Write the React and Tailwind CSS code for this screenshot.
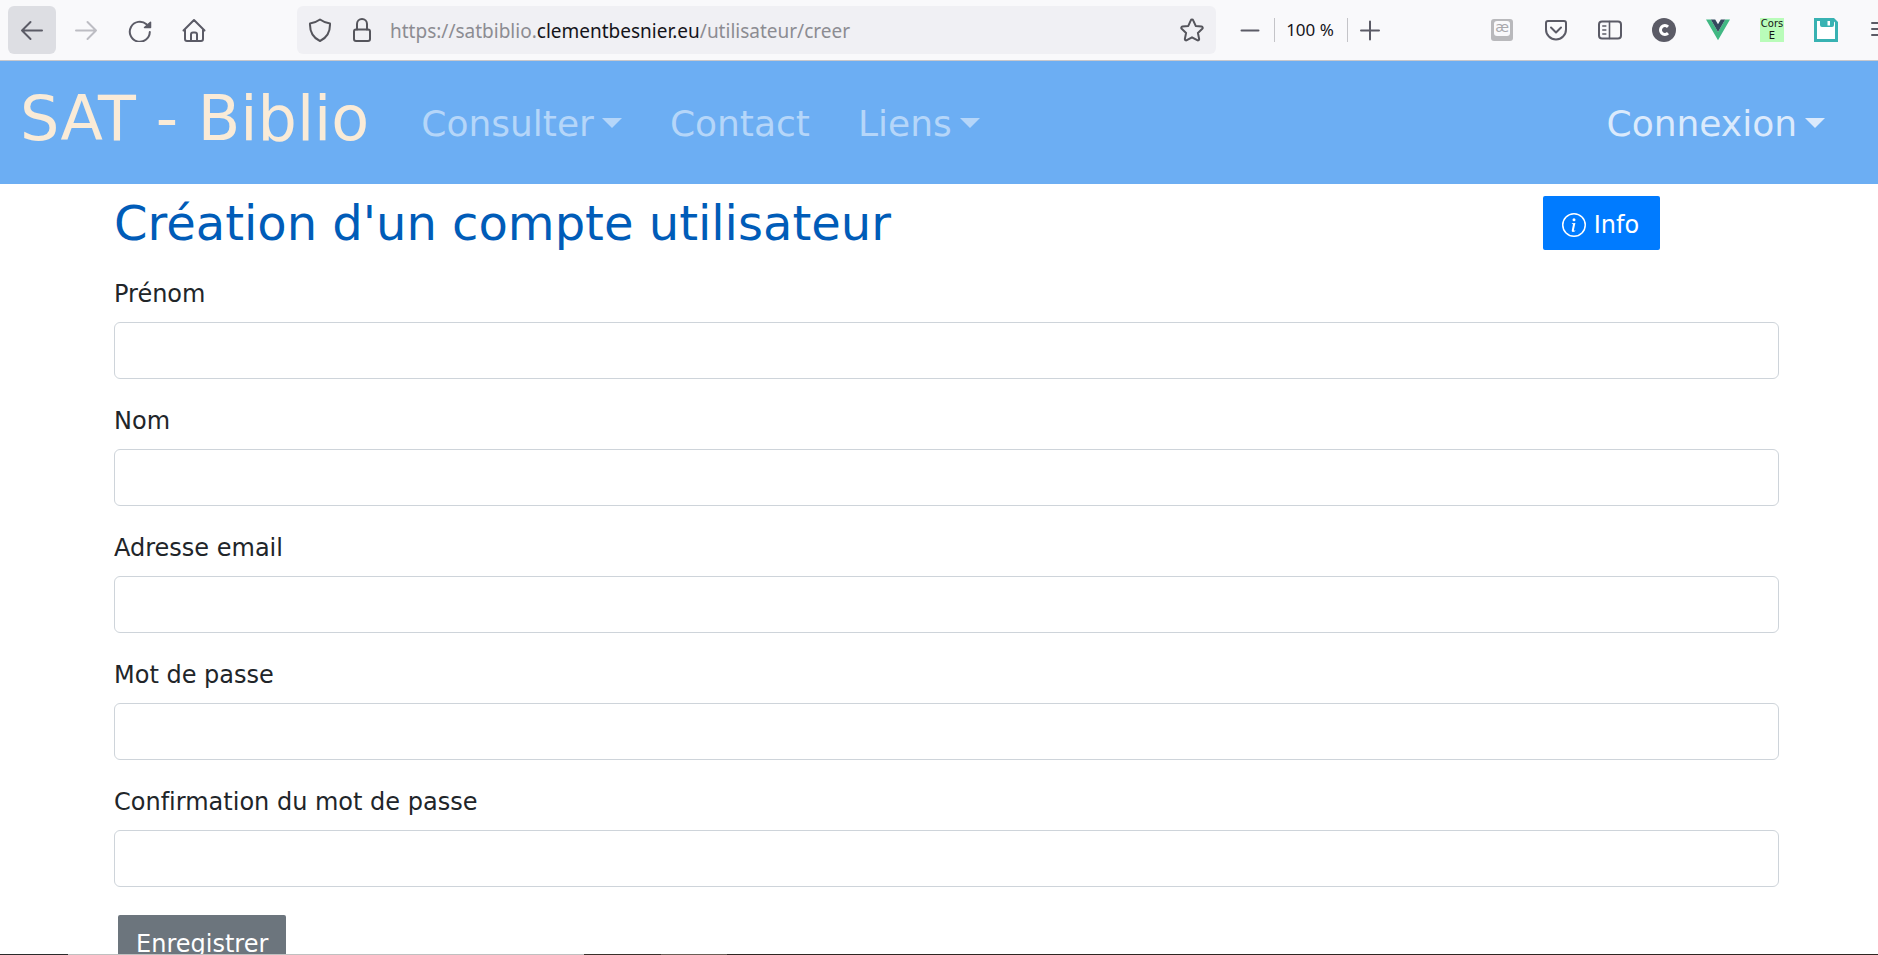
import React from "react";
import { BsInfoCircle } from "react-icons/bs";

const fields = [
  { id: "prenom", label: "Prénom", type: "text" },
  { id: "nom", label: "Nom", type: "text" },
  { id: "email", label: "Adresse email", type: "email" },
  { id: "mot-de-passe", label: "Mot de passe", type: "password" },
  { id: "confirmation", label: "Confirmation du mot de passe", type: "password" },
];

function Icon({ children, className = "" }) {
  return (
    <svg
      viewBox="0 0 24 24"
      aria-hidden="true"
      className={"size-6 shrink-0 " + className}
      fill="none"
      stroke="currentColor"
      strokeWidth="2"
      strokeLinecap="round"
      strokeLinejoin="round"
    >
      {children}
    </svg>
  );
}

function ToolButton({ label, className = "", children }) {
  return (
    <button
      type="button"
      aria-label={label}
      className={"flex size-12 shrink-0 items-center justify-center rounded-md " + className}
    >
      {children}
    </button>
  );
}

function Extension({ label, children }) {
  return (
    <button
      type="button"
      aria-label={label}
      className="flex h-12 w-[54px] shrink-0 items-center justify-center"
    >
      {children}
    </button>
  );
}

function Toolbar() {
  return (
    <header className="flex h-[61px] shrink-0 items-center border-b border-[#c8c8cc] bg-[#f9f9fb] pl-2 text-[#5b5b66]">
      <div className="flex gap-1.5">
        <ToolButton label="Précédent" className="bg-[#dddee3]">
          <Icon>
            <path d="M22 12.500H2M10.500 4 2 12.500l8.500 8.500" />
          </Icon>
        </ToolButton>
        <ToolButton label="Suivant" className="text-[#bdbdc3]">
          <Icon>
            <path d="M2 12.500h20M13.500 4l8.500 8.500-8.500 8.500" />
          </Icon>
        </ToolButton>
        <ToolButton label="Actualiser">
          <Icon>
            <path d="M21.800 14A10 10 0 1 1 18.500 6.300" />
            <path d="M22.500 4.200V9.500H16.500z" fill="currentColor" strokeWidth="1.500" />
          </Icon>
        </ToolButton>
        <ToolButton label="Accueil">
          <Icon>
            <path d="M1.500 12.500 12 2l10.500 10.500M3 11v10a2 2 0 0 0 2 2h14a2 2 0 0 0 2-2V11M9 23v-6.500a2 2 0 0 1 2-2h2a2 2 0 0 1 2 2V23" />
          </Icon>
        </ToolButton>
      </div>

      <div className="ml-[79px] flex h-12 w-[919px] items-center rounded-md bg-[#f0f0f4] pr-3 pl-[11px] text-[#55555c]">
        <Icon>
          <path d="M12 1.500c3 2.200 6.300 3.400 10 4 .3 7.500-2.500 14-10 17.500C4.500 19.500 1.700 13 2 5.500c3.700-.6 7-1.800 10-4z" />
        </Icon>
        <Icon className="ml-[18px]">
          <rect x="4" y="11.500" width="16" height="11.500" rx="2" />
          <path d="M7 11.500V6a5 5 0 0 1 10 0v5.500" />
        </Icon>
        <div
          role="textbox"
          aria-label="Adresse"
          className="ml-4 flex-1 pt-0.5 font-['Noto_Sans','Open_Sans',sans-serif] text-[19px] leading-7 whitespace-nowrap text-[#8c8c92]"
        >
          https://satbiblio.<span className="text-[#15141a]">clementbesnier.eu</span>/utilisateur/creer
        </div>
        <button type="button" aria-label="Marquer cette page">
          <Icon>
            <path d="M12 1.600c.6 0 1 .3 1.200.8l2.500 5.500 5.900.7c1.100.2 1.500 1.400.7 2.200l-4.400 4.100 1.200 5.900c.2 1.200-.9 1.900-1.900 1.400L12 19.300l-5.200 2.900c-1 .5-2.100-.3-1.900-1.400l1.200-5.900-4.400-4.100c-.8-.8-.4-2 .7-2.200l5.900-.7 2.500-5.500c.2-.5.600-.8 1.200-.8z" />
          </Icon>
        </button>
      </div>

      <div className="flex items-center">
        <button type="button" aria-label="Zoom arrière" className="ml-[22px]">
          <Icon>
            <path d="M3.500 12.500h17" />
          </Icon>
        </button>
        <div className="ml-3 flex h-6 w-[74px] items-center justify-center border-x border-[#c4c4c8] pr-0.5 font-['Noto_Sans','Open_Sans',sans-serif] text-[17px] whitespace-nowrap text-[#15141a]">
          100 %
        </div>
        <button type="button" aria-label="Zoom avant" className="ml-2.5">
          <Icon>
            <path d="M3 12.500h18M12 3.500v18" />
          </Icon>
        </button>
      </div>

      <div className="ml-auto flex items-center">
        <Extension label="Caractères spéciaux">
          <svg viewBox="0 0 24 24" className="size-6" aria-hidden="true">
            <rect x="1" y="1" width="22" height="22" rx="3" fill="#b9b9bc" />
            <rect x="4" y="3" width="16" height="15" rx="3" fill="#f9f9fb" />
            <text x="12" y="13.500" textAnchor="middle" fontFamily="DejaVu Sans" fontSize="14" fill="#a8a8ac">
              æ
            </text>
          </svg>
        </Extension>
        <Extension label="Pocket">
          <Icon>
            <path d="M4 3h16a2 2 0 0 1 2 2v6.500a10 10 0 0 1-20 0V5a2 2 0 0 1 2-2z" />
            <path d="m7 9.500 5 5 5-5" />
          </Icon>
        </Extension>
        <Extension label="Panneau latéral">
          <Icon>
            <rect x="1" y="3.500" width="22" height="17" rx="3" />
            <path d="M11.500 3.500v17M4.800 8h3M4.800 12h3M4.800 16h3" strokeWidth="1.600" />
          </Icon>
        </Extension>
        <Extension label="Compte">
          <svg viewBox="0 0 24 24" className="size-6" aria-hidden="true">
            <circle cx="12" cy="12" r="12" fill="#5b5b66" />
            <path d="M16 8.900A4.400 4.400 0 1 0 16 15.100" fill="none" stroke="#fff" strokeWidth="3" />
          </svg>
        </Extension>
        <Extension label="Vue.js devtools">
          <svg viewBox="0 0 24 24" className="size-6" aria-hidden="true">
            <path d="M0 1.500h4.800L12 14l7.200-12.500H24L12 22.300z" fill="#41b883" />
            <path d="M4.800 1.500h4.400L12 6.300l2.800-4.800h4.400L12 14z" fill="#34495e" />
          </svg>
        </Extension>
        <Extension label="Cors E">
          <span className="flex size-6 flex-col items-center justify-center bg-[#b9fcb9] font-['DejaVu_Sans',sans-serif] text-[10px] leading-3 text-[#141414]">
            <span>Cors</span>
            <span>E</span>
          </span>
        </Extension>
        <Extension label="Enregistrer la page">
          <svg viewBox="0 0 24 24" className="size-6" aria-hidden="true">
            <path d="M0 0h20l4 4v20H0z" fill="#38b2b2" />
            <path d="M3 3h3v4a2 2 0 0 0 2 2h10a2 2 0 0 0 2-2V3.500l1 1V21H3z" fill="#fff" />
            <path d="M13.500 3h2.500v4.500h-2.500z" fill="#fff" />
          </svg>
        </Extension>
        <button
          type="button"
          aria-label="Menu"
          className="flex h-12 w-[25px] items-center overflow-hidden pl-[17px]"
        >
          <Icon>
            <path d="M2 5h20M2 11h20M2 17h20" />
          </Icon>
        </button>
      </div>
    </header>
  );
}

function Caret() {
  return (
    <svg viewBox="0 0 20 10" className="mb-0.5 h-2.5 w-5 shrink-0" aria-hidden="true">
      <path d="M0 0h20L10 10z" fill="currentColor" />
    </svg>
  );
}

function Navbar() {
  return (
    <nav className="flex h-[123px] shrink-0 items-center bg-[#6caef3] pr-[53px] pl-5 text-[36px] leading-[54px] whitespace-nowrap text-[#b5d6f9]">
      <a href="#accueil" className="pb-2 text-[62px] leading-[90px] text-[#faebd7]">
        SAT - Biblio
      </a>
      <div className="ml-[52px] flex items-center gap-12 pt-0.5">
        <button type="button" className="flex items-center gap-2">
          Consulter <Caret />
        </button>
        <a href="#contact">Contact</a>
        <button type="button" className="flex items-center gap-2">
          Liens <Caret />
        </button>
      </div>
      <button type="button" className="ml-auto flex items-center gap-2 pt-0.5 text-[#dbeafc]">
        Connexion <Caret />
      </button>
    </nav>
  );
}

export default function App() {
  return (
    <div className="flex h-screen flex-col overflow-hidden bg-white font-['DejaVu_Sans',Verdana,sans-serif] text-[#212529] [font-variant-ligatures:none]">
      <Toolbar />
      <Navbar />
      <main className="min-h-0 flex-1 overflow-hidden pt-2 pr-[99px] pl-[114px]">
        <div className="flex h-[62px] items-center justify-between pr-[115px]">
          <h1 className="text-[48px] leading-[58px] whitespace-nowrap text-[#005cb8]">
            Création d'un compte utilisateur
          </h1>
          <button
            type="button"
            className="flex h-[62px] w-[125px] items-center justify-center gap-2 rounded-md border-4 border-white bg-[#007bff] pt-1 pr-0.5 text-[24px] leading-9 text-white"
          >
            <BsInfoCircle className="size-6" aria-hidden="true" />
            Info
          </button>
        </div>
        <form className="mt-[22px]">
          {fields.map((field) => (
            <div key={field.id} className="mb-6">
              <label htmlFor={field.id} className="mb-2.5 block text-[24px] leading-9">
                {field.label}
              </label>
              <input
                id={field.id}
                type={field.type}
                className="block h-[57px] w-full rounded-md border border-[#ced4da] bg-white px-4 text-[24px] outline-none"
              />
            </div>
          ))}
          <button
            type="submit"
            className="h-[62px] rounded-md border-4 border-white bg-[#6c757d] px-[18px] pt-1 text-[24px] leading-9 text-white"
          >
            Enregistrer
          </button>
        </form>
      </main>
      <div className="flex h-px shrink-0 bg-[#2f2622]">
        <div className="w-[68px] bg-[#2b2b2b]" />
        <div className="w-[516px] bg-[#c0c0c0]" />
        <div className="w-[77px] bg-[#3a302b]" />
        <div className="w-[66px] bg-[#6a5e56]" />
      </div>
    </div>
  );
}
